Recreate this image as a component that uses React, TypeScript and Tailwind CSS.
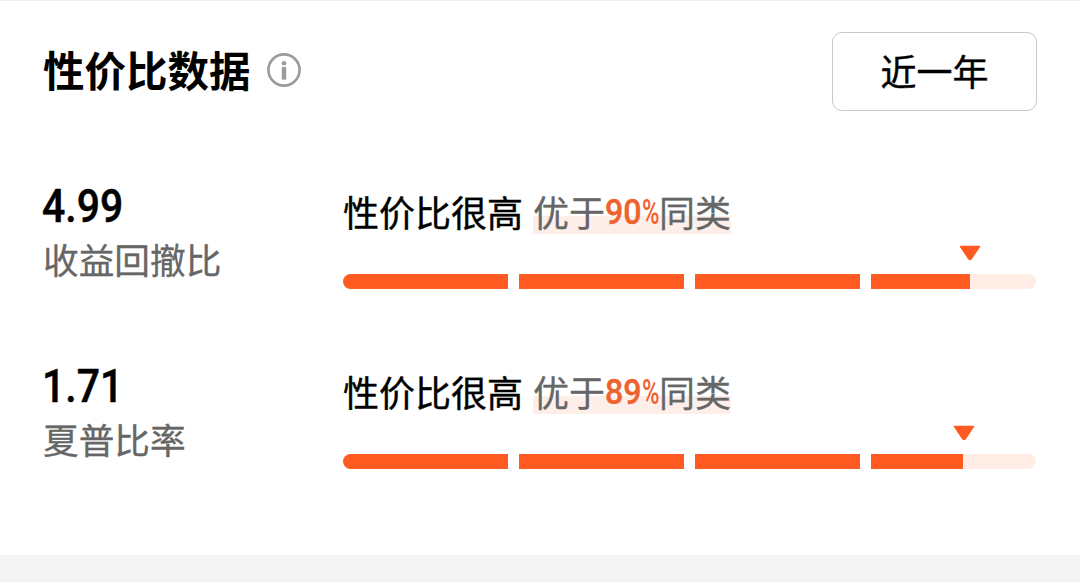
type Metric = {
  value: string;
  name: string;
  percent: number;
  // filled width of the last segment and centre of the marker, in px
  fill: number;
  marker: number;
};

const metrics: Metric[] = [
  { value: "4.99", name: "收益回撤比", percent: 90, fill: 99, marker: 627 },
  { value: "1.71", name: "夏普比率", percent: 89, fill: 92, marker: 621 },
];

function InfoIcon() {
  return (
    <svg width="34" height="34" viewBox="0 0 34 34" className="block">
      <circle cx="17" cy="17" r="15.6" fill="none" stroke="#9b9b9b" strokeWidth="2.6" />
      <circle cx="17" cy="10.3" r="2.3" fill="#9b9b9b" />
      <rect x="14.8" y="14" width="4.4" height="12.6" fill="#9b9b9b" />
    </svg>
  );
}

function Marker({ left }: { left: number }) {
  return (
    <svg
      width="22"
      height="16"
      viewBox="0 0 22 16"
      className="block"
      style={{ marginLeft: left - 11 }}
    >
      <path
        d="M1.6 1.5h18.8L12 14q-1 1-2 0z"
        fill="#ff5a1f"
        stroke="#ff5a1f"
        strokeWidth="1.6"
        strokeLinejoin="round"
      />
    </svg>
  );
}

function Bar({ fill }: { fill: number }) {
  return (
    <div className="flex h-[15px] w-[693px] gap-[11px] overflow-hidden rounded-full">
      <div className="flex-1 bg-[#ff5a1f]" />
      <div className="flex-1 bg-[#ff5a1f]" />
      <div className="flex-1 bg-[#ff5a1f]" />
      <div className="flex-1 bg-[#ffede6]">
        <div className="h-full bg-[#ff5a1f]" style={{ width: fill }} />
      </div>
    </div>
  );
}

function MetricRow({ value, name, percent, fill, marker }: Metric) {
  return (
    <div className="flex h-[180px]">
      <div className="w-[300px]">
        <div className="-mt-px -ml-px h-[54px] origin-left scale-x-[0.89] font-['Roboto'] text-[46px] leading-[54px] font-medium text-black [-webkit-text-stroke:0.5px_#000]">
          {value}
        </div>
        <div className="-mt-px h-[54px] text-[35.7px] leading-[54px] text-[#666] [-webkit-text-stroke:0.3px_#666]">
          {name}
        </div>
      </div>

      <div className="w-[693px]">
        <div className="mt-[6px] flex h-[54px] items-center text-[36px] leading-[50px] whitespace-nowrap">
          <span className="w-[190px] pb-[4px] text-black [-webkit-text-stroke:0.4px_#000]">
            性价比很高
          </span>
          <span className="flex h-[42px] w-[198px] items-center bg-linear-to-b from-transparent from-57% to-[#fdeeea] to-57% text-[#666]">
            <span className="pb-[4px] [-webkit-text-stroke:0.3px_#666]">优于</span>
            <span className="flex h-[42px] w-[54px] items-center font-['Roboto'] text-[35px] leading-[42px] text-[#f0622d]">
              <span className="w-[37px] origin-left scale-x-[0.92] font-medium [-webkit-text-stroke:0.4px_#f0622d]">
                {percent}
              </span>
              <span className="w-[17px] origin-left scale-x-[0.68] font-medium">%</span>
            </span>
            <span className="pb-[4px] [-webkit-text-stroke:0.3px_#666]">同类</span>
          </span>
        </div>
        <div className="pt-[5px] pb-[13px]">
          <Marker left={marker} />
        </div>
        <Bar fill={fill} />
      </div>
    </div>
  );
}

export default function App() {
  return (
    <div className="flex h-[582px] w-[1080px] flex-col border-t border-[#f0f0f0] bg-white font-['Noto_Sans_CJK_SC',sans-serif]">
      <div className="flex items-start justify-between pt-[31px] pr-[43px] pl-[43px]">
        <div className="flex h-[79px] items-center">
          <h1 className="pb-[5px] text-[41.5px] leading-[60px] font-bold text-black">
            性价比数据
          </h1>
          <div className="-mt-[4px] ml-[16px]">
            <InfoIcon />
          </div>
        </div>
        <button className="h-[79px] w-[205px] rounded-[10px] border border-[#c8c8c8] pb-[4px] text-[36px] text-black [-webkit-text-stroke:0.4px_#000]">
          近一年
        </button>
      </div>

      <div className="flex-1 pt-[69px] pl-[43px]">
        {metrics.map((metric) => (
          <MetricRow key={metric.name} {...metric} />
        ))}
      </div>

      <div className="h-[27px] shrink-0 bg-[#f4f4f4]" />
    </div>
  );
}
